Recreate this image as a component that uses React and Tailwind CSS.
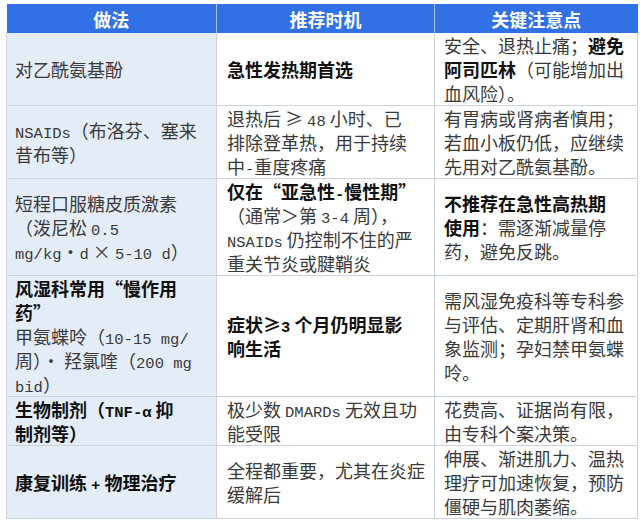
const B = ({ children }) => <b className="font-bold text-[#111]">{children}</b>;

// latin runs in a monospace face, like the original's SimSun half-width glyphs
const L = ({ children }) => (
  <span className="font-['Liberation_Mono',monospace] text-[15.5px]">{children}</span>
);

const rows = [
  {
    a: [<>对乙酰氨基酚</>],
    b: [<B>急性发热期首选</B>],
    c: [
      <>
        安全、退热止痛；<B>避免</B>
      </>,
      <>
        <B>阿司匹林</B>（可能增加出
      </>,
      <>血风险）。</>,
    ],
  },
  {
    a: [
      <>
        <L>NSAIDs</L>（布洛芬、塞来
      </>,
      <>昔布等）</>,
    ],
    b: [
      <>
        退热后 ≥ <L>48</L> 小时、已
      </>,
      <>排除登革热，用于持续</>,
      <>
        中<L>-</L>重度疼痛
      </>,
    ],
    c: [<>有胃病或肾病者慎用；</>, <>若血小板仍低，应继续</>, <>先用对乙酰氨基酚。</>],
  },
  {
    a: [
      <>短程口服糖皮质激素</>,
      <>
        （泼尼松 <L>0.5</L>
      </>,
      <>
        <L>mg/kg</L>·<L>d</L> × <L>5-10 d</L>）
      </>,
    ],
    b: [
      <B>
        仅在“亚急性<L>-</L>慢性期”
      </B>,
      <>
        （通常＞第 <L>3-4</L> 周），
      </>,
      <>
        <L>NSAIDs</L> 仍控制不住的严
      </>,
      <>重关节炎或腱鞘炎</>,
    ],
    c: [
      <B>不推荐在急性高热期</B>,
      <>
        <B>使用</B>：需逐渐减量停
      </>,
      <>药，避免反跳。</>,
    ],
  },
  {
    a: [
      <B>风湿科常用“慢作用</B>,
      <B>药”</B>,
      <>
        甲氨蝶呤（<L>10-15 mg/</L>
      </>,
      <>
        周）· 羟氯喹（<L>200 mg</L>
      </>,
      <>
        <L>bid</L>）
      </>,
    ],
    b: [
      <B>
        症状≥<L>3</L> 个月仍明显影
      </B>,
      <B>响生活</B>,
    ],
    c: [<>需风湿免疫科等专科参</>, <>与评估、定期肝肾和血</>, <>象监测；孕妇禁甲氨蝶</>, <>呤。</>],
  },
  {
    a: [
      <B>
        生物制剂（<L>TNF-α</L> 抑
      </B>,
      <B>制剂等）</B>,
    ],
    b: [
      <>
        极少数 <L>DMARDs</L> 无效且功
      </>,
      <>能受限</>,
    ],
    c: [<>花费高、证据尚有限，</>, <>由专科个案决策。</>],
  },
  {
    a: [
      <B>
        康复训练 <L>+</L> 物理治疗
      </B>,
    ],
    b: [<>全程都重要，尤其在炎症</>, <>缓解后</>],
    c: [<>伸展、渐进肌力、温热</>, <>理疗可加速恢复，预防</>, <>僵硬与肌肉萎缩。</>],
  },
];

function Lines({ lines }) {
  return lines.map((line, i) => (
    <div key={i} className="h-[24px] whitespace-nowrap leading-[24px]">
      {line}
    </div>
  ));
}

export default function App() {
  return (
    <div className="min-h-[521px] w-[640px] bg-white pl-[6px] pt-[4px] font-['Noto_Sans_CJK_SC',sans-serif] text-[18px] leading-[24px] text-[#3a3a3a]">
      <table className="w-[631px] table-fixed border-collapse">
        <colgroup>
          <col className="w-[210px]" />
          <col className="w-[218px]" />
          <col className="w-[203px]" />
        </colgroup>
        <thead>
          <tr className="h-[29px] bg-[#3171e5] text-white">
            <th className="border-r border-[#a9c3ef] text-center font-bold">做法</th>
            <th className="border-r border-[#a9c3ef] text-center font-bold">推荐时机</th>
            <th className="text-center font-bold">关键注意点</th>
          </tr>
        </thead>
        <tbody>
          {rows.map((r, i) => (
            <tr key={i} className="border-b border-[#cdd3dc]">
              <td className="border-l border-r border-[#cdd3dc] bg-[#e4ecf8] p-0 pl-[8px] align-middle">
                <Lines lines={r.a} />
              </td>
              <td className="border-r border-[#cdd3dc] p-0 pl-[10px] align-middle">
                <Lines lines={r.b} />
              </td>
              <td className="border-r border-[#cdd3dc] p-0 pl-[9px] align-middle">
                <Lines lines={r.c} />
              </td>
            </tr>
          ))}
        </tbody>
      </table>
    </div>
  );
}
